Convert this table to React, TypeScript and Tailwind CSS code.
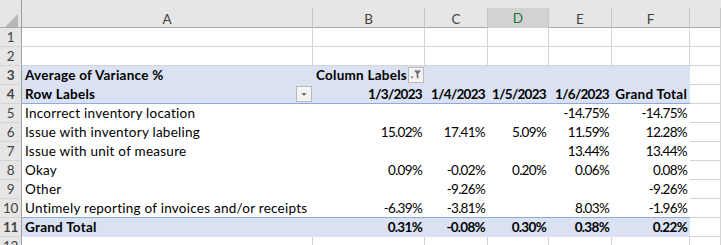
import React from "react";

type Cell = string;

const COLS = "grid grid-cols-[22px_291px_112px_63px_61px_63px_78px_1fr]";

const dataRows: { n: number; label: string; vals: Cell[] }[] = [
  { n: 5, label: "Incorrect inventory location", vals: ["", "", "", "-14.75%", "-14.75%"] },
  { n: 6, label: "Issue with inventory labeling", vals: ["15.02%", "17.41%", "5.09%", "11.59%", "12.28%"] },
  { n: 7, label: "Issue with unit of measure", vals: ["", "", "", "13.44%", "13.44%"] },
  { n: 8, label: "Okay", vals: ["0.09%", "-0.02%", "0.20%", "0.06%", "0.08%"] },
  { n: 9, label: "Other", vals: ["", "-9.26%", "", "", "-9.26%"] },
  { n: 10, label: "Untimely reporting of invoices and/or receipts", vals: ["-6.39%", "-3.81%", "", "8.03%", "-1.96%"] },
];

const totals = ["0.31%", "-0.08%", "0.30%", "0.38%", "0.22%"];
const dates = ["1/3/2023", "1/4/2023", "1/5/2023", "1/6/2023"];

// cell text sits on the bottom of the cell, like Excel's default alignment
const TXT = "h-[19px] flex items-end leading-[16px] pb-[1px] whitespace-nowrap";
const LBL = `${TXT} pl-[3px] tracking-[0.25px]`;
const NUM = `${TXT} pr-[3px] justify-end tracking-[-0.7px]`;

const RowHead = ({ n }: { n: number }) => (
  <div className="h-[19px] bg-[#e6e6e6] border-r border-b border-r-[#9f9f9f] border-b-[#d4d4d4] flex items-end justify-center pb-[1px] leading-[16px] text-[#444] tracking-[-0.3px]">
    {n}
  </div>
);

// plain grid cell outside the pivot
const Blank = () => <div className="h-[19px] border-r border-b border-[#d4d4d4] bg-white" />;

// little dropdown button on the pivot labels
const FilterButton = ({ funnel }: { funnel?: boolean }) => (
  <div className="w-[16px] h-[16px] bg-[#f3f3f3] border border-[#b9b9b9] flex items-center justify-center">
    <svg width="12" height="12" viewBox="0 0 12 12">
      {funnel ? (
        <>
          <path d="M0.5 7.5h3l-1.5 2z" fill="#6a6a6a" />
          <path d="M4 1.5h7l-2.7 3.3v5l-1.6-1v-4z" fill="#6a6a6a" />
        </>
      ) : (
        <path d="M3.5 5h5l-2.5 3z" fill="#6a6a6a" />
      )}
    </svg>
  </div>
);

const colHeads = ["A", "B", "C", "D", "E", "F", ""];

export default function App() {
  return (
    <div className="w-[721px] h-[245px] overflow-hidden bg-white font-[Lato,sans-serif] text-[13.5px] text-black select-none">
      {/* column headers */}
      <div className={`${COLS} h-[28px] bg-[#e6e6e6] border-b border-[#ababab]`}>
        <div className="pt-[8px] border-r border-[#9f9f9f] flex items-end justify-end">
          <svg width="13" height="13" viewBox="0 0 13 13" className="mr-[3px] mb-[3px]">
            <path d="M13 0V13H0z" fill="#b8b8b8" />
          </svg>
        </div>
        {colHeads.map((c, i) => (
          <div key={i} className="pt-[8px] h-full">
            <div
              className={
                c === "D"
                  ? "h-full flex items-center justify-center bg-[#d2d2d2] border-r border-[#c6c6c6] border-b-2 border-b-[#217346] text-[#217346]"
                  : "h-full flex items-center justify-center border-r border-[#c6c6c6] text-[#444]"
              }
            >
              {c}
            </div>
          </div>
        ))}
      </div>

      {/* rows 1-2 */}
      {[1, 2].map((n) => (
        <div key={n} className={COLS}>
          <RowHead n={n} />
          {colHeads.map((_, i) => (
            <Blank key={i} />
          ))}
        </div>
      ))}

      {/* row 3 */}
      <div className={`${COLS} font-bold`}>
        <RowHead n={3} />
        <div className={`${LBL} bg-[#d9e1f2] border-b border-[#d9e1f2]`}>Average of Variance %</div>
        <div className={`${LBL} bg-[#d9e1f2] border-b border-[#d9e1f2] justify-between pr-[1px]`}>
          <span>Column Labels</span>
          <div className="self-start mt-[1px]">
            <FilterButton funnel />
          </div>
        </div>
        <div className="col-span-4 h-[19px] bg-[#d9e1f2] border-b border-[#d9e1f2]" />
        <Blank />
      </div>

      {/* row 4 */}
      <div className={`${COLS} font-bold`}>
        <RowHead n={4} />
        <div className={`${LBL} bg-[#d9e1f2] border-b border-[#8ea9db] justify-between pr-[1px]`}>
          <span>Row Labels</span>
          <div className="self-start mt-[1px]">
            <FilterButton />
          </div>
        </div>
        {dates.map((d) => (
          <div key={d} className={`${NUM} bg-[#d9e1f2] border-b border-[#8ea9db]`}>
            {d}
          </div>
        ))}
        <div className={`${LBL} pl-0 pr-[3px] justify-end bg-[#d9e1f2] border-b border-[#8ea9db]`}>Grand Total</div>
        <Blank />
      </div>

      {/* data rows */}
      {dataRows.map((r) => {
        const line = r.n === 10 ? "border-[#8ea9db]" : "border-white";
        return (
          <div key={r.n} className={COLS}>
            <RowHead n={r.n} />
            <div className={`${LBL} bg-white border-b ${line}`}>{r.label}</div>
            {r.vals.map((v, i) => (
              <div key={i} className={`${NUM} bg-white border-b ${line}`}>
                {v}
              </div>
            ))}
            <Blank />
          </div>
        );
      })}

      {/* row 11 grand total */}
      <div className={`${COLS} font-bold`}>
        <RowHead n={11} />
        <div className={`${LBL} bg-[#d9e1f2] border-b border-[#d9e1f2]`}>Grand Total</div>
        {totals.map((t, i) => (
          <div key={i} className={`${NUM} bg-[#d9e1f2] border-b border-[#d9e1f2]`}>
            {t}
          </div>
        ))}
        <Blank />
      </div>

      {/* row 12 (cut off) */}
      <div className={COLS}>
        <RowHead n={12} />
        {colHeads.map((_, i) => (
          <Blank key={i} />
        ))}
      </div>
    </div>
  );
}
